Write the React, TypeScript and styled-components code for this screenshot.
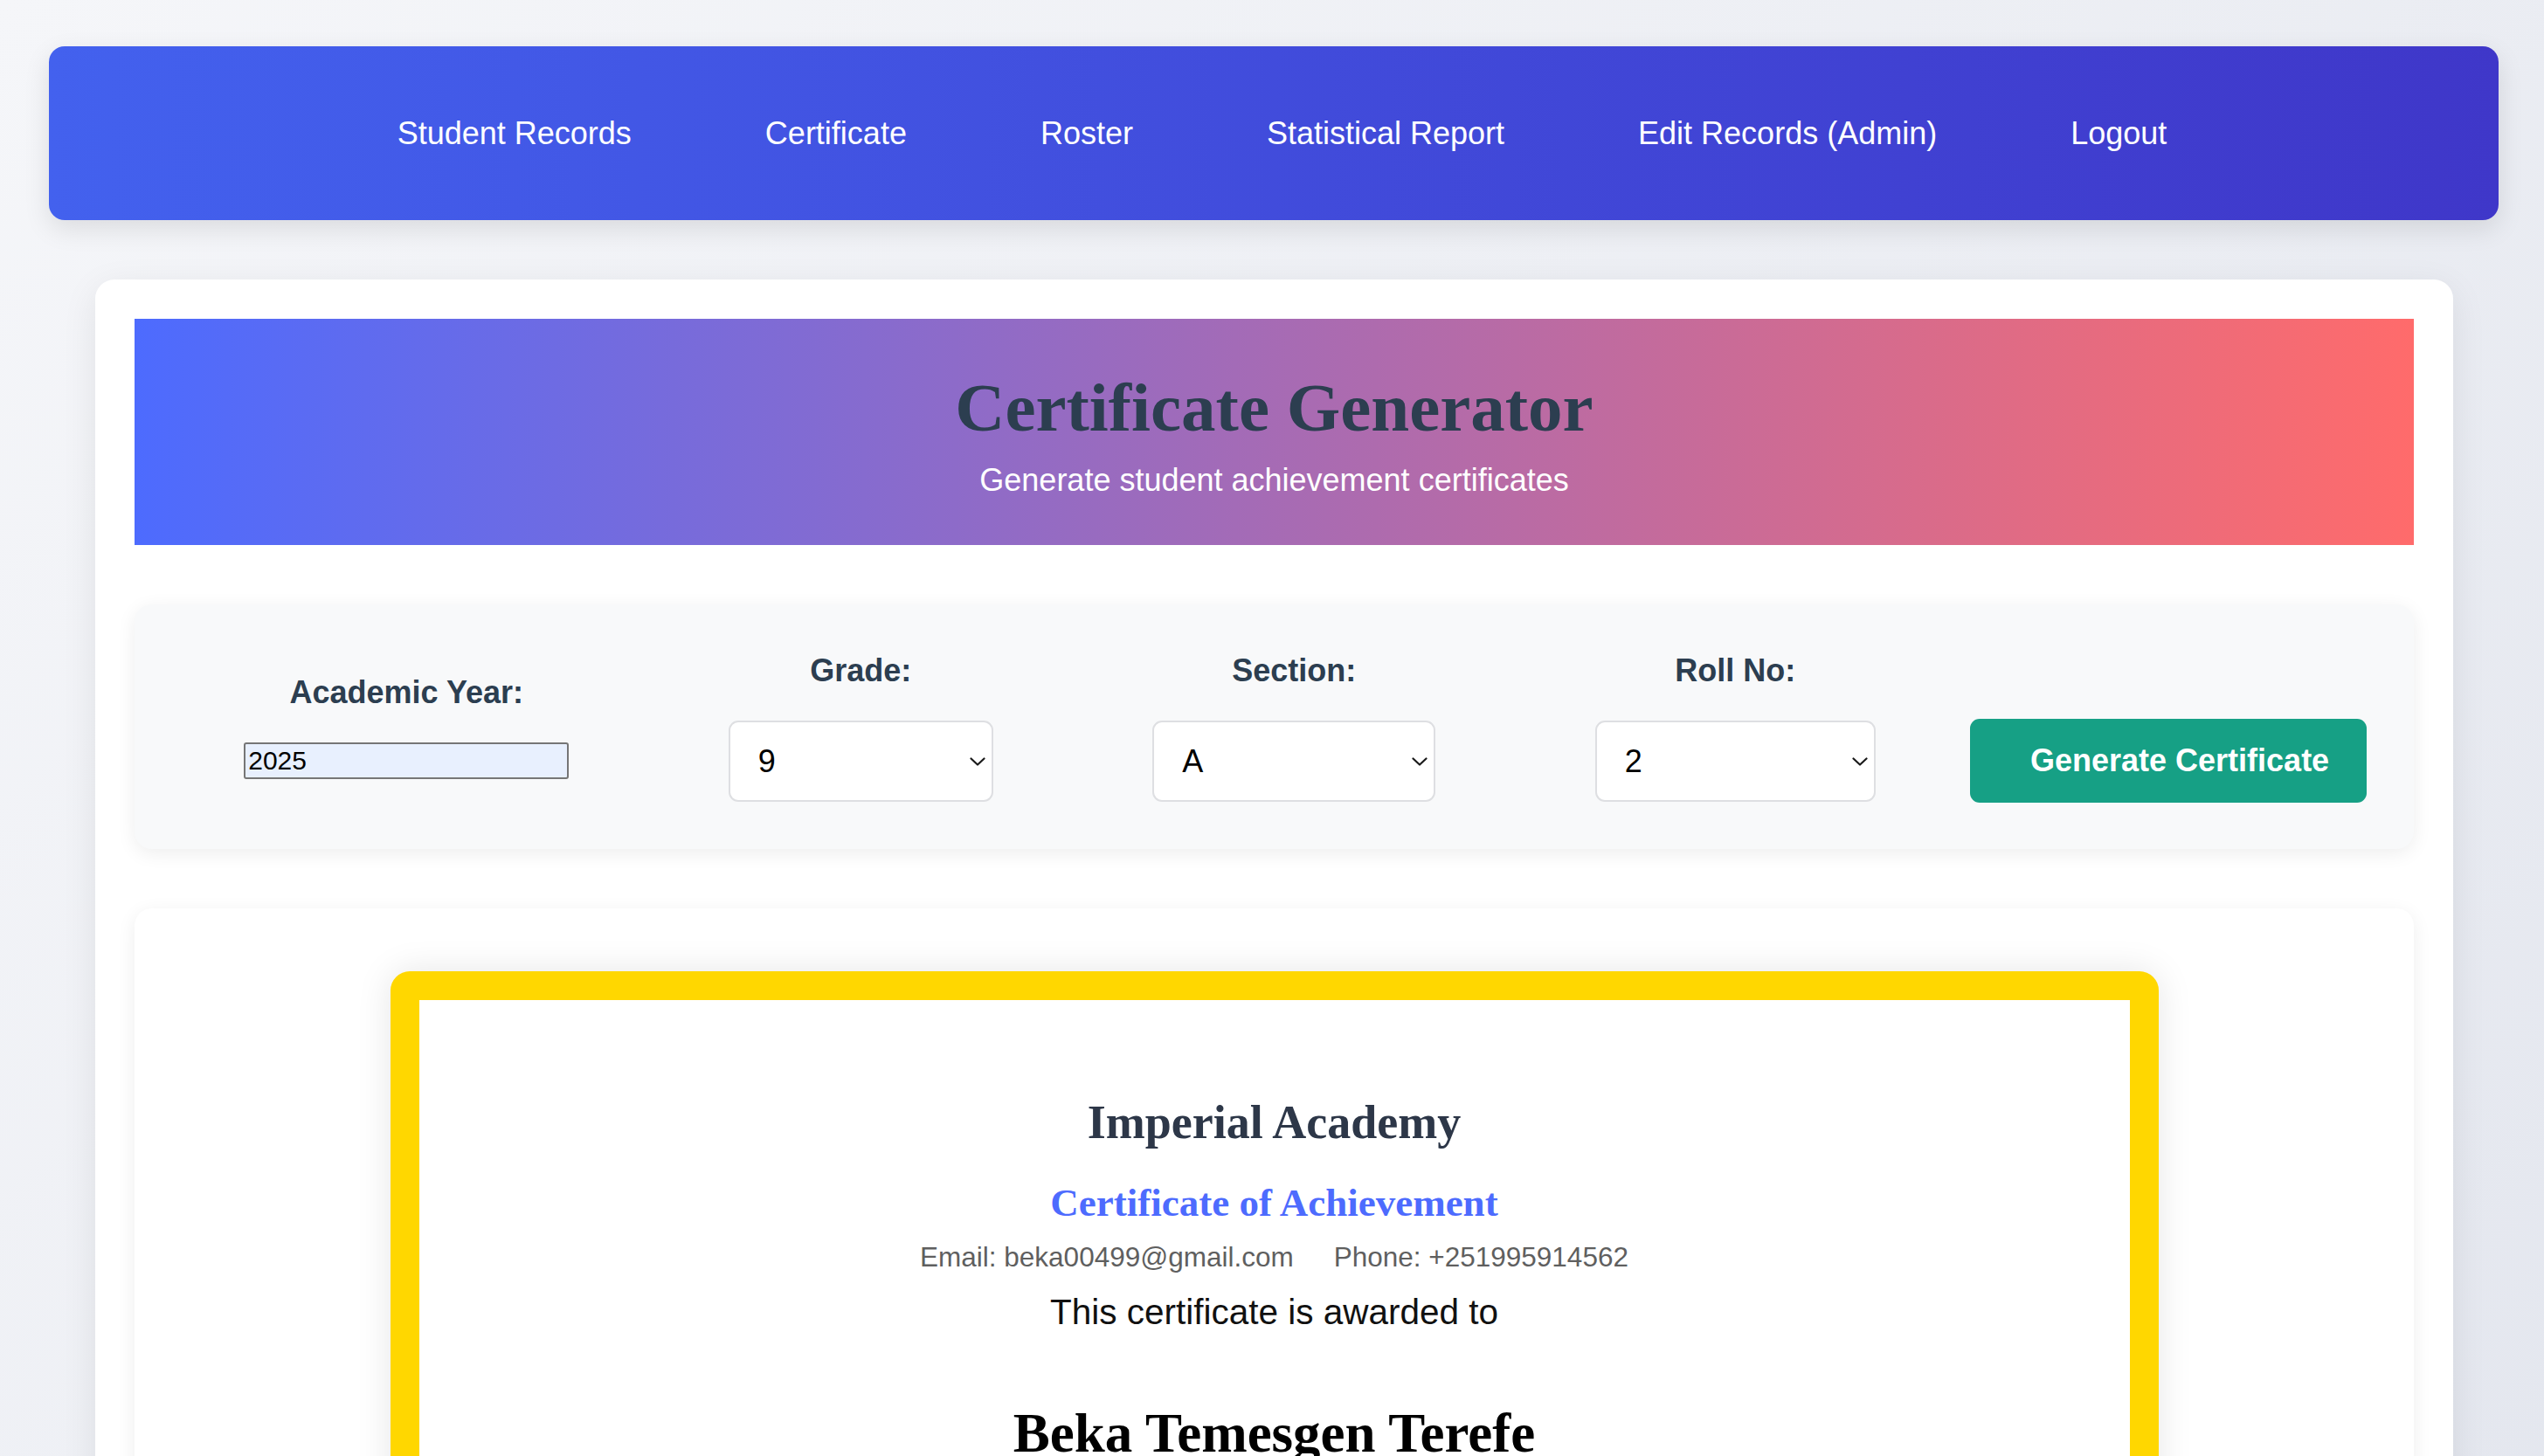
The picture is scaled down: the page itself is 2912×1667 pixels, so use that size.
import React from "react";
import styled, { createGlobalStyle } from "styled-components";

const GlobalStyle = createGlobalStyle`
  html, body {
    margin: 0;
    padding: 0;
  }
  body {
    min-height: 100vh;
    background: linear-gradient(135deg, #f5f6f9 0%, #e3e6ee 100%);
    font-family: "Liberation Sans", Arial, sans-serif;
  }
  * { box-sizing: border-box; }
`;

const Page = styled.div`
  padding: 53px 52px 0 56px;
`;

const NavBar = styled.nav`
  height: 199px;
  border-radius: 18px;
  background: linear-gradient(90deg, #4361ee 0%, #3f37c9 100%);
  box-shadow: 0 10px 30px rgba(0, 0, 0, 0.1);
  display: flex;
  align-items: center;
  justify-content: center;
`;

const NavList = styled.ul`
  list-style: none;
  margin: 0;
  padding: 0 0 0 19px;
  display: flex;
  gap: 153px;
`;

const NavLink = styled.a`
  color: #ffffff;
  text-decoration: none;
  font-size: 36px;
  line-height: 41px;
  white-space: nowrap;
`;

const Card = styled.main`
  margin: 68px 52px 0 53px;
  background: #ffffff;
  border-radius: 22px;
  box-shadow: 0 10px 40px rgba(0, 0, 0, 0.08);
  padding: 45px 45px 60px;
`;

const Banner = styled.header`
  height: 259px;
  background: linear-gradient(90deg, #4d6bfe 0%, #ff6b6b 100%);
  text-align: center;
  padding-top: 56px;
`;

const BannerTitle = styled.h1`
  margin: 0 0 17px;
  font-family: "Liberation Serif", "Times New Roman", serif;
  font-weight: 700;
  font-size: 79px;
  line-height: 91px;
  color: #2c3e50;
`;

const BannerSub = styled.p`
  margin: 0;
  font-size: 36px;
  line-height: 41px;
  color: #ffffff;
`;

const FilterPanel = styled.section`
  margin-top: 68px;
  height: 280px;
  background: #f8f9fa;
  border-radius: 20px;
  box-shadow: 0 5px 22px rgba(0, 0, 0, 0.07);
  display: flex;
  align-items: center;
  gap: 34px;
  padding: 0 54px 0 51px;
`;

const FieldGroup = styled.div`
  flex: 1 1 auto;
  display: flex;
  flex-direction: column;
  align-items: center;
`;

const FieldLabel = styled.label`
  font-size: 36px;
  line-height: 41px;
  font-weight: 700;
  color: #2c3e50;
  margin-bottom: 37px;
  white-space: nowrap;
`;

const YearInput = styled.input`
  width: 372px;
  height: 42px;
  font-family: "Liberation Sans", Arial, sans-serif;
  font-size: 30px;
  color: #000;
  background: #e8f0fe;
  border: 2px solid #767676;
  border-radius: 3px;
  padding: 1px 3px;
  outline: none;
`;

const SelectWrap = styled.div<{ $w: number }>`
  position: relative;
  width: ${(p) => p.$w}px;
  height: 93px;
`;

const Select = styled.select`
  appearance: none;
  -webkit-appearance: none;
  width: 100%;
  height: 100%;
  background: #ffffff;
  border: 2px solid #dedfe2;
  border-radius: 11px;
  padding: 0 40px 0 32px;
  font-family: "Liberation Sans", Arial, sans-serif;
  font-size: 36px;
  color: #000;
  outline: none;
`;

const Chevron = styled.svg`
  position: absolute;
  right: 9px;
  top: 42px;
  width: 18px;
  height: 10px;
  pointer-events: none;
`;

const GenerateButton = styled.button`
  flex: none;
  align-self: flex-end;
  margin-bottom: 53px;
  width: 454px;
  height: 96px;
  background: #16a085;
  color: #ffffff;
  border: none;
  border-radius: 11px;
  font-family: "Liberation Sans", Arial, sans-serif;
  font-size: 36px;
  font-weight: 700;
  text-align: left;
  padding: 0 20px 0 69px;
  white-space: nowrap;
`;

const PreviewCard = styled.section`
  margin-top: 68px;
  background: #ffffff;
  border-radius: 20px;
  box-shadow: 0 5px 22px rgba(0, 0, 0, 0.07);
  padding: 72px 0 72px;
`;

const Frame = styled.div`
  max-width: 2024px;
  margin: 0 auto;
  border: 33px solid #ffd700;
  border-radius: 22px;
  box-shadow: 0 0 40px rgba(0, 0, 0, 0.1);
  background: #ffffff;
  padding: 109px 60px 120px;
  text-align: center;
`;

const SchoolName = styled.h2`
  margin: 0 0 35px;
  font-family: "Liberation Serif", "Times New Roman", serif;
  font-weight: 700;
  font-size: 54px;
  line-height: 62px;
  color: #2d3748;
`;

const CertTitle = styled.h3`
  margin: 0 0 18px;
  font-family: "Liberation Serif", "Times New Roman", serif;
  font-weight: 700;
  font-size: 45px;
  line-height: 52px;
  color: #4d6bfe;
`;

const ContactRow = styled.div`
  display: flex;
  justify-content: center;
  gap: 46px;
  font-size: 31.5px;
  line-height: 36px;
  color: #5f5f5f;
  margin-bottom: 22px;
`;

const AwardText = styled.p`
  margin: 0 0 80px;
  font-size: 40.5px;
  line-height: 46px;
  color: #111;
`;

const StudentName = styled.h2`
  margin: 0;
  font-family: "Liberation Serif", "Times New Roman", serif;
  font-weight: 700;
  font-size: 63px;
  line-height: 72px;
  color: #000;
`;

const ChevronIcon = () => (
  <Chevron viewBox="0 0 18 10" fill="none">
    <path d="M1.5 1.5 L9 8.5 L16.5 1.5" stroke="#1a1a1a" strokeWidth="2.2" strokeLinecap="round" strokeLinejoin="round" />
  </Chevron>
);

const navItems = [
  "Student Records",
  "Certificate",
  "Roster",
  "Statistical Report",
  "Edit Records (Admin)",
  "Logout",
];

export default function App() {
  return (
    <>
      <GlobalStyle />
      <Page>
        <NavBar>
          <NavList>
            {navItems.map((item) => (
              <li key={item}>
                <NavLink href="#">{item}</NavLink>
              </li>
            ))}
          </NavList>
        </NavBar>

        <Card>
          <Banner>
            <BannerTitle>Certificate Generator</BannerTitle>
            <BannerSub>Generate student achievement certificates</BannerSub>
          </Banner>

          <FilterPanel>
            <FieldGroup>
              <FieldLabel>Academic Year:</FieldLabel>
              <YearInput defaultValue="2025" />
            </FieldGroup>
            <FieldGroup>
              <FieldLabel>Grade:</FieldLabel>
              <SelectWrap $w={303}>
                <Select defaultValue="9">
                  <option>9</option>
                  <option>10</option>
                  <option>11</option>
                  <option>12</option>
                </Select>
                <ChevronIcon />
              </SelectWrap>
            </FieldGroup>
            <FieldGroup>
              <FieldLabel>Section:</FieldLabel>
              <SelectWrap $w={324}>
                <Select defaultValue="A">
                  <option>A</option>
                  <option>B</option>
                  <option>C</option>
                </Select>
                <ChevronIcon />
              </SelectWrap>
            </FieldGroup>
            <FieldGroup>
              <FieldLabel>Roll No:</FieldLabel>
              <SelectWrap $w={321}>
                <Select defaultValue="2">
                  <option>1</option>
                  <option>2</option>
                  <option>3</option>
                </Select>
                <ChevronIcon />
              </SelectWrap>
            </FieldGroup>
            <GenerateButton>Generate Certificate</GenerateButton>
          </FilterPanel>

          <PreviewCard>
            <Frame>
              <SchoolName>Imperial Academy</SchoolName>
              <CertTitle>Certificate of Achievement</CertTitle>
              <ContactRow>
                <span>Email: beka00499@gmail.com</span>
                <span>Phone: +251995914562</span>
              </ContactRow>
              <AwardText>This certificate is awarded to</AwardText>
              <StudentName>Beka Temesgen Terefe</StudentName>
            </Frame>
          </PreviewCard>
        </Card>
      </Page>
    </>
  );
}
